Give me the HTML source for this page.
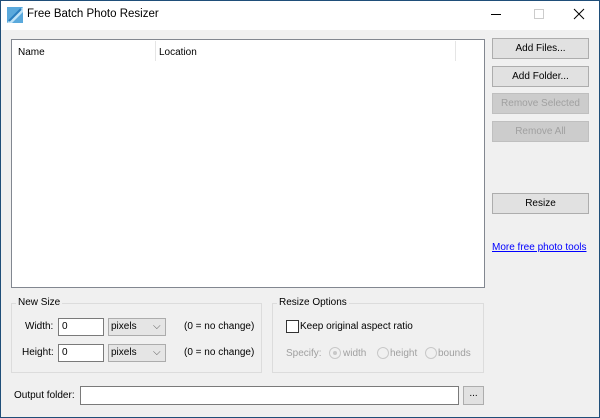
<!DOCTYPE html><html><head><style>
*{box-sizing:border-box;margin:0;padding:0}
body{width:600px;height:418px;background:#1f4e79;font-family:"Liberation Sans",sans-serif;font-size:10px;color:#000;position:relative;overflow:hidden}
.win{position:absolute;left:1px;top:1px;width:598px;height:416px;background:#f0f0f0}
.title{position:absolute;left:0;top:0;width:598px;height:29px;background:#fff}
.a{position:absolute}
.btn{position:absolute;left:491px;width:97px;height:21px;background:#e1e1e1;border:1px solid #adadad;text-align:center;line-height:19px}
.dis{color:#a0a0a0;background:#cccccc;border-color:#bfbfbf}
.grp{position:absolute;border:1px solid #dcdcdc;top:302px;height:70px}
.lg{position:absolute;top:-7px;left:4px;background:#f0f0f0;padding:0 2px}
.inp{position:absolute;background:#fff;border:1px solid #7a7a7a;height:18px;padding-left:3px;line-height:16px}
.sel{position:absolute;background:#e5e5e5;border:1px solid #acacac;height:18px;width:58px;padding-left:2px;line-height:16px}
.rad{position:absolute;top:43px;width:12px;height:12px;border:1px solid #c8c8c8;border-radius:50%}
.g{color:#a0a0a0;top:44px}
</style></head><body><div class="win">
<div class="title">
<svg class="a" style="left:6px;top:6px" width="16" height="16"><rect width="16" height="16" fill="#5aa9dc"/><path d="M0 16L16 0V5L5 16Z" fill="#bfe3f7"/><path d="M2 14L14 2" stroke="#2b7fc0" stroke-width="2"/></svg>
<div class="a" style="left:26px;top:7px;font-size:11.5px">Free Batch Photo Resizer</div>
<div class="a" style="left:490px;top:13px;width:10px;height:1px;background:#000"></div>
<div class="a" style="left:533px;top:8px;width:10px;height:10px;border:1px solid #ccc"></div>
<svg class="a" style="left:572px;top:7px" width="12" height="12"><path d="M1 1L11 11M11 1L1 11" stroke="#000" stroke-width="1"/></svg>
</div>
<div class="a" style="left:10px;top:38px;width:474px;height:249px;background:#fff;border:1px solid #828790">
<div class="a" style="left:6px;top:7px">Name</div>
<div class="a" style="left:143px;top:1px;width:1px;height:20px;background:#e5e5e5"></div>
<div class="a" style="left:147px;top:7px">Location</div>
<div class="a" style="left:443px;top:1px;width:1px;height:20px;background:#e5e5e5"></div>
</div>
<div class="btn" style="top:37px">Add Files...</div>
<div class="btn" style="top:65px">Add Folder...</div>
<div class="btn dis" style="top:92px">Remove Selected</div>
<div class="btn dis" style="top:120px">Remove All</div>
<div class="btn" style="top:192px">Resize</div>
<div class="a" style="left:491px;top:241px;color:#0000ff;text-decoration:underline">More free photo tools</div>
<div class="grp" style="left:10px;width:251px"><div class="lg">New Size</div>
<div class="a" style="left:13px;top:17px">Width:</div>
<div class="inp" style="left:46px;top:14px;width:46px">0</div>
<div class="sel" style="left:96px;top:14px">pixels<span class="a" style="left:44px;top:0;color:#555">⌵</span></div>
<div class="a" style="left:172px;top:17px">(0 = no change)</div>
<div class="a" style="left:10px;top:43px">Height:</div>
<div class="inp" style="left:46px;top:40px;width:46px">0</div>
<div class="sel" style="left:96px;top:40px">pixels<span class="a" style="left:44px;top:0;color:#555">⌵</span></div>
<div class="a" style="left:172px;top:43px">(0 = no change)</div>
</div>
<div class="grp" style="left:271px;width:212px"><div class="lg">Resize Options</div>
<div class="a" style="left:13px;top:16px;width:13px;height:13px;border:1px solid #333;background:#fff"></div>
<div class="a" style="left:27px;top:17px">Keep original aspect ratio</div>
<div class="a g" style="left:13px">Specify:</div>
<div class="rad" style="left:56px"><span class="a" style="left:3px;top:3px;width:4px;height:4px;border-radius:50%;background:#c8c8c8"></span></div>
<div class="a g" style="left:70px">width</div>
<div class="rad" style="left:104px"></div>
<div class="a g" style="left:117px">height</div>
<div class="rad" style="left:152px"></div>
<div class="a g" style="left:165px">bounds</div>
</div>
<div class="a" style="left:13px;top:389px">Output folder:</div>
<div class="inp" style="left:79px;top:385px;width:379px;height:19px"></div>
<div class="a" style="left:462px;top:385px;width:21px;height:19px;background:#e1e1e1;border:1px solid #adadad;text-align:center;line-height:14px">...</div>
</div></body></html>
